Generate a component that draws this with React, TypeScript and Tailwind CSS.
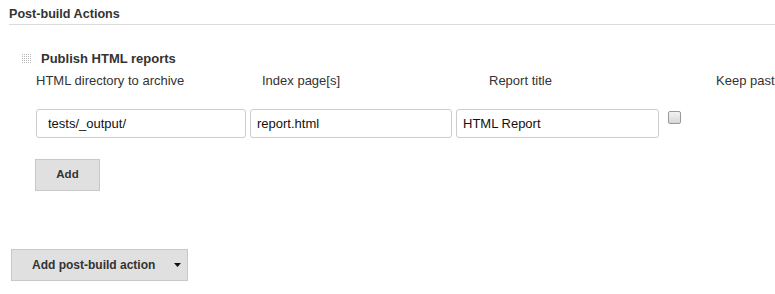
import React from "react";

function Grip() {
  const dots = [];
  for (let r = 0; r < 5; r++) {
    for (let c = 0; c < 5; c++) {
      dots.push(<rect key={`${r}-${c}`} x={c * 2} y={r * 2} width="1" height="1" fill="#b8b8b8" />);
    }
  }
  return (
    <svg width="10" height="10" viewBox="0 0 10 10" className="block">
      {dots}
    </svg>
  );
}

export default function App() {
  return (
    <div
      className="w-[775px] h-[294px] bg-white text-[#333] text-[13px] overflow-hidden"
      style={{ fontFamily: '"Liberation Sans", Arial, sans-serif' }}
    >
      <div className="pl-[9px] pt-[6px]">
        <div className="font-bold text-[12.6px] leading-[16px] h-[17px]">Post-build Actions</div>
        <div className="h-px bg-[#dcdcdc] mt-[1px]"></div>
      </div>

      <div className="flex items-center mt-[27px] ml-[22px] h-[14px]">
        <Grip />
        <span className="ml-[9px] font-bold text-[13px]">Publish HTML reports</span>
      </div>

      <div className="flex mt-[7px] ml-[36px] h-[16px] leading-[16px]">
        <div className="w-[226px]">HTML directory to archive</div>
        <div className="w-[227px]">Index page[s]</div>
        <div className="w-[227px]">Report title</div>
        <div className="whitespace-nowrap">Keep past</div>
      </div>

      <div className="flex items-start mt-[20px] ml-[36px]">
        <input
          readOnly
          value="tests/_output/"
          className="w-[210px] h-[29px] border border-[#ccc] rounded-[3px] px-[11px] text-[13px] text-[#111] outline-none"
          style={{ fontFamily: '"Liberation Sans", Arial, sans-serif' }}
        />
        <input
          readOnly
          value="report.html"
          className="ml-[4px] w-[202px] h-[29px] border border-[#ccc] rounded-[3px] px-[6px] text-[13px] text-[#111] outline-none"
          style={{ fontFamily: '"Liberation Sans", Arial, sans-serif' }}
        />
        <input
          readOnly
          value="HTML Report"
          className="ml-[4px] w-[203px] h-[29px] border border-[#ccc] rounded-[3px] px-[6px] text-[13px] text-[#111] outline-none"
          style={{ fontFamily: '"Liberation Sans", Arial, sans-serif' }}
        />
        <div className="ml-[9px] mt-[2px] w-[13px] h-[13px] border border-[#999] rounded-[2px] bg-gradient-to-b from-[#f2f2f2] to-[#d8d8d8]"></div>
      </div>

      <div className="ml-[35px] mt-[21px]">
        <div className="w-[65px] h-[32px] bg-[#e0e0e0] border border-[#c8c8c8] flex items-center justify-center font-bold text-[11.5px] text-[#333]">
          Add
        </div>
      </div>

      <div className="ml-[11px] mt-[58px]">
        <div className="w-[177px] h-[32px] bg-[#e0e0e0] border border-[#c8c8c8] flex items-center font-bold text-[12px] text-[#333]">
          <span className="ml-[20px]">Add post-build action</span>
          <svg width="7" height="4" viewBox="0 0 7 4" className="ml-[19px]">
            <path d="M0 0 H7 L3.5 4 Z" fill="#111" />
          </svg>
        </div>
      </div>
    </div>
  );
}
